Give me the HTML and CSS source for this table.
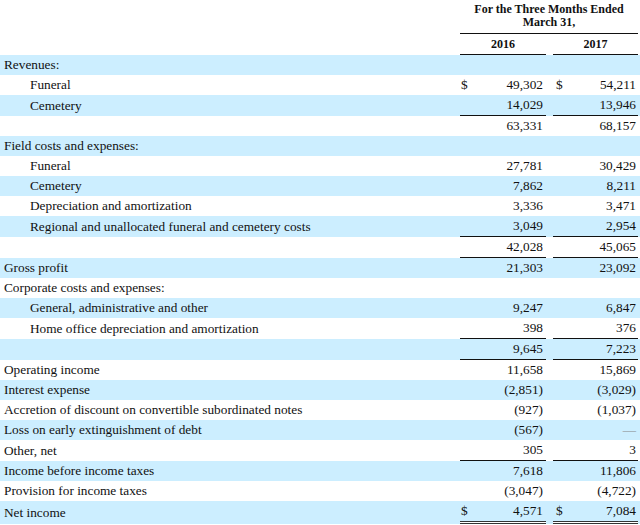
FILE: index.html
```html
<!DOCTYPE html>
<html>
<head>
<meta charset="utf-8">
<link rel="stylesheet" href="styles.css">
</head>
<body>
<table class="fin">
  <colgroup>
    <col class="c-label"><col class="c-a"><col class="c-gap"><col class="c-b"><col class="c-end">
  </colgroup>
  <tr class="head1">
    <td></td>
    <td colspan="3" class="period">For the Three Months Ended<br>March 31,</td>
    <td></td>
  </tr>
  <tr class="head2">
    <td></td>
    <td class="yr line">2016</td>
    <td></td>
    <td class="yr line">2017</td>
    <td></td>
  </tr>
  <tr class="blue"><td class="lbl">Revenues:</td><td></td><td></td><td></td><td></td></tr>
  <tr><td class="lbl ind">Funeral</td><td class="num"><span class="cur">$</span><span>49,302</span></td><td></td><td class="num nb"><span class="cur">$</span><span>54,211</span></td><td></td></tr>
  <tr class="blue"><td class="lbl ind">Cemetery</td><td class="num line"><span>14,029</span></td><td></td><td class="num nb line"><span>13,946</span></td><td></td></tr>
  <tr><td class="lbl"></td><td class="num"><span>63,331</span></td><td></td><td class="num nb"><span>68,157</span></td><td></td></tr>
  <tr class="blue"><td class="lbl">Field costs and expenses:</td><td></td><td></td><td></td><td></td></tr>
  <tr><td class="lbl ind">Funeral</td><td class="num"><span>27,781</span></td><td></td><td class="num nb"><span>30,429</span></td><td></td></tr>
  <tr class="blue"><td class="lbl ind">Cemetery</td><td class="num"><span>7,862</span></td><td></td><td class="num nb"><span>8,211</span></td><td></td></tr>
  <tr><td class="lbl ind">Depreciation and amortization</td><td class="num"><span>3,336</span></td><td></td><td class="num nb"><span>3,471</span></td><td></td></tr>
  <tr class="blue"><td class="lbl ind">Regional and unallocated funeral and cemetery costs</td><td class="num line"><span>3,049</span></td><td></td><td class="num nb line"><span>2,954</span></td><td></td></tr>
  <tr><td class="lbl"></td><td class="num line"><span>42,028</span></td><td></td><td class="num nb line"><span>45,065</span></td><td></td></tr>
  <tr class="blue"><td class="lbl">Gross profit</td><td class="num"><span>21,303</span></td><td></td><td class="num nb"><span>23,092</span></td><td></td></tr>
  <tr><td class="lbl">Corporate costs and expenses:</td><td></td><td></td><td></td><td></td></tr>
  <tr class="blue"><td class="lbl ind">General, administrative and other</td><td class="num"><span>9,247</span></td><td></td><td class="num nb"><span>6,847</span></td><td></td></tr>
  <tr><td class="lbl ind">Home office depreciation and amortization</td><td class="num line"><span>398</span></td><td></td><td class="num nb line"><span>376</span></td><td></td></tr>
  <tr class="blue"><td class="lbl"></td><td class="num line"><span>9,645</span></td><td></td><td class="num nb line"><span>7,223</span></td><td></td></tr>
  <tr><td class="lbl">Operating income</td><td class="num"><span>11,658</span></td><td></td><td class="num nb"><span>15,869</span></td><td></td></tr>
  <tr class="blue"><td class="lbl">Interest expense</td><td class="num"><span>(2,851)</span></td><td></td><td class="num nb"><span>(3,029)</span></td><td></td></tr>
  <tr><td class="lbl">Accretion of discount on convertible subordinated notes</td><td class="num"><span>(927)</span></td><td></td><td class="num nb"><span>(1,037)</span></td><td></td></tr>
  <tr class="blue"><td class="lbl">Loss on early extinguishment of debt</td><td class="num"><span>(567)</span></td><td></td><td class="num nb"><span class="dash">—</span></td><td></td></tr>
  <tr><td class="lbl">Other, net</td><td class="num line"><span>305</span></td><td></td><td class="num nb line"><span>3</span></td><td></td></tr>
  <tr class="blue"><td class="lbl">Income before income taxes</td><td class="num"><span>7,618</span></td><td></td><td class="num nb"><span>11,806</span></td><td></td></tr>
  <tr><td class="lbl">Provision for income taxes</td><td class="num"><span>(3,047)</span></td><td></td><td class="num nb"><span>(4,722)</span></td><td></td></tr>
  <tr class="blue"><td class="lbl">Net income</td><td class="num dbl"><span class="cur">$</span><span>4,571</span></td><td></td><td class="num nb dbl"><span class="cur">$</span><span>7,084</span></td><td></td></tr>
</table>
</body>
</html>
```

FILE: styles.css
```css
html, body {
  margin: 0;
  padding: 0;
  background: #ffffff;
}
body {
  font-family: "Liberation Serif", "Times New Roman", serif;
  font-size: 13.3px;
  color: #111;
}
.fin {
  width: 640px;
  border-collapse: separate;
  border-spacing: 0;
  table-layout: fixed;
}
.c-label { width: 460px; }
.c-a { width: 86px; }
.c-gap { width: 7px; }
.c-b { width: 85px; }
.c-end { width: 2px; }

.fin td {
  padding: 0;
  height: 20px;
  line-height: 20px;
  white-space: nowrap;
  vertical-align: middle;
}
.head1 td {
  height: 33px;
}
.head1 .period {
  font-weight: bold;
  font-size: 12px;
  text-align: center;
  line-height: 13px;
  vertical-align: top;
  padding-top: 3px;
  height: 30px;
  border-bottom: 1.5px solid #111;
}
.head2 .yr {
  font-weight: bold;
  font-size: 12px;
  text-align: center;
}
.blue td {
  background: #cceeff;
  background-clip: padding-box;
}
.lbl {
  padding-left: 4px !important;
}
.lbl.ind {
  padding-left: 30px !important;
}
.num {
  padding: 0 3px 0 1px !important;
}
.num.nb {
  padding: 0 2px 0 3px !important;
}
.num span {
  float: right;
}
.num span.cur {
  float: left;
}
.line {
  border-bottom: 1px solid #111;
}
.dbl {
  border-bottom: 3px double #333;
}
.dash {
  color: #888;
}
```
